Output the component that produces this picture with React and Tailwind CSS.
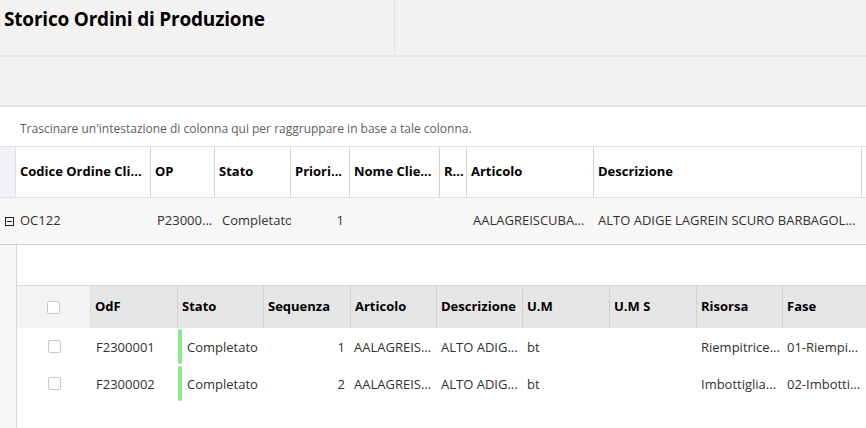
import React from "react";

const mainCols = [
  { label: "Codice Ordine Cli...", w: "w-[135px]" },
  { label: "OP", w: "w-[64px]" },
  { label: "Stato", w: "w-[76px]" },
  { label: "Priori...", w: "w-[59px]" },
  { label: "Nome Clie...", w: "w-[90px]" },
  { label: "R...", w: "w-[27px]" },
  { label: "Articolo", w: "w-[127px]" },
  { label: "Descrizione", w: "w-[268px]" },
];

const subCols = [
  { label: "OdF", w: "w-[87px]" },
  { label: "Stato", w: "w-[86px]" },
  { label: "Sequenza", w: "w-[87px]" },
  { label: "Articolo", w: "w-[86px]" },
  { label: "Descrizione", w: "w-[86px]" },
  { label: "U.M", w: "w-[87px]" },
  { label: "U.M S", w: "w-[87px]" },
  { label: "Risorsa", w: "w-[86px]" },
  { label: "Fase", w: "w-[90px]" },
];

const subRows = [
  { odf: "F2300001", seq: "1", art: "AALAGREIS...", desc: "ALTO ADIG...", um: "bt", ris: "Riempitrice...", fase: "01-Riempi..." },
  { odf: "F2300002", seq: "2", art: "AALAGREIS...", desc: "ALTO ADIG...", um: "bt", ris: "Imbottiglia...", fase: "02-Imbotti..." },
];

function Checkbox() {
  return <span className="block w-[13px] h-[13px] border border-[#c8c8cc] rounded-[2px] bg-white" />;
}

function StatusBar() {
  return <span className="block w-[4px] self-stretch rounded-full bg-[#8ce68c]" />;
}

export default function App() {
  return (
    <div
      className="w-[866px] h-[428px] overflow-hidden bg-[#f3f2f1] text-[#323130]"
      style={{ fontFamily: "'Open Sans', 'Noto Sans', sans-serif" }}
    >
      {/* top toolbar */}
      <div className="flex h-[57px] border-b-2 border-[#e8e6e4]">
        <div className="w-[395px] border-r border-[#e6e4e2] pl-[4px] pt-[5px]">
          <h1 className="text-[19px] font-bold text-black tracking-[-0.2px]">Storico Ordini di Produzione</h1>
        </div>
        <div className="flex-1" />
      </div>
      <div className="h-[48px]" />

      {/* grid panel */}
      <div className="bg-white border-t-2 border-[#e4e4e4] h-full">
        <div className="h-[40px] flex items-center pl-[20px] pt-[4px] text-[12px] text-[#605e5c] border-b border-[#e0e0e0]">
          Trascinare un'intestazione di colonna qui per raggruppare in base a tale colonna.
        </div>

        {/* main header */}
        <div className="flex h-[51px] border-b border-[#e0e0e0]">
          <div className="w-[16px] bg-[#f2f2f6] border-r border-[#e2e2e6]" />
          {mainCols.map((c) => (
            <div
              key={c.label}
              className={`${c.w} shrink-0 flex items-center pl-[4px] text-[13px] font-bold text-black border-r border-[#d4d4d4] whitespace-nowrap overflow-hidden`}
            >
              {c.label}
            </div>
          ))}
        </div>

        {/* master row */}
        <div className="flex h-[47px] bg-[#f7f7f7] border-b border-[#cfcfcf] text-[13px] items-center">
          <div className="w-[16px] flex justify-end pr-[2px]">
            <svg width="9" height="9" viewBox="0 0 9 9">
              <rect x="0.5" y="0.5" width="8" height="8" fill="none" stroke="#222" strokeWidth="1" />
              <line x1="2" y1="4.5" x2="7" y2="4.5" stroke="#222" strokeWidth="1" />
            </svg>
          </div>
          <div className="w-[135px] pl-[4px]">OC122</div>
          <div className="w-[64px] pl-[6px]">P23000...</div>
          <div className="w-[76px] flex h-full py-[7px] pl-[1px] overflow-hidden whitespace-nowrap">
            <StatusBar />
            <span className="pl-[6px] self-center">Completato</span>
          </div>
          <div className="w-[59px] text-right pr-[6px]">1</div>
          <div className="w-[90px]" />
          <div className="w-[27px]" />
          <div className="w-[127px] pl-[6px]">AALAGREISCUBA...</div>
          <div className="w-[268px] pl-[4px] whitespace-nowrap">ALTO ADIGE LAGREIN SCURO BARBAGOL...</div>
        </div>

        {/* detail */}
        <div className="flex h-[200px]">
          <div className="w-[16px] bg-[#f7f7f7]" />
          <div className="flex-1 border-l border-[#d6d6d6] bg-white overflow-hidden">
            <div className="h-[40px]" />
            <div className="flex h-[43px] bg-[#e6e6e6] border-t border-[#d8d8dc]">
              <div className="w-[74px] shrink-0 bg-[#f3f3f6] border-r border-[#dcdcdc] flex items-center justify-center">
                <Checkbox />
              </div>
              {subCols.map((c) => (
                <div
                  key={c.label}
                  className={`${c.w} shrink-0 flex items-center pl-[4px] text-[13px] font-bold text-black border-r border-[#d0d0d0] whitespace-nowrap overflow-hidden`}
                >
                  {c.label}
                </div>
              ))}
            </div>
            {subRows.map((r) => (
              <div key={r.odf} className="flex h-[37px] items-center text-[13px] whitespace-nowrap">
                <div className="w-[74px] shrink-0 flex justify-center">
                  <Checkbox />
                </div>
                <div className="w-[87px] shrink-0 pl-[5px] pt-[2px]">{r.odf}</div>
                <div className="w-[86px] shrink-0 flex h-full py-[1px]">
                  <StatusBar />
                  <span className="pl-[5px] pt-[2px] self-center">Completato</span>
                </div>
                <div className="w-[87px] shrink-0 text-right pr-[6px] pt-[2px]">{r.seq}</div>
                <div className="w-[86px] shrink-0 pl-[3px] pt-[2px]">{r.art}</div>
                <div className="w-[86px] shrink-0 pl-[4px] pt-[2px]">{r.desc}</div>
                <div className="w-[87px] shrink-0 pl-[4px] pt-[2px]">{r.um}</div>
                <div className="w-[87px] shrink-0" />
                <div className="w-[86px] shrink-0 pl-[4px] pt-[2px]">{r.ris}</div>
                <div className="w-[90px] shrink-0 pl-[4px] pt-[2px]">{r.fase}</div>
              </div>
            ))}
          </div>
        </div>
      </div>
    </div>
  );
}
